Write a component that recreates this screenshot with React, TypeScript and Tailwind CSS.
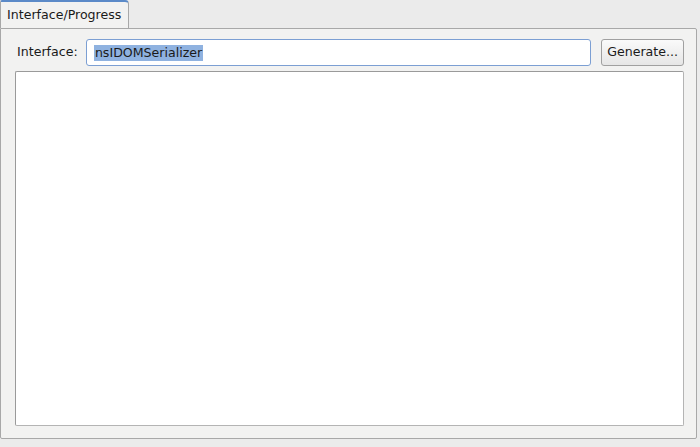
import React from 'react';

const App: React.FC = () => {
    return (
        <div className="w-[700px] h-[447px] bg-[#ebebeb] flex flex-col font-['DejaVu_Sans',sans-serif] text-[12.6px] text-[#1a1a1a] overflow-hidden">
            {/* tab strip */}
            <div className="flex h-[28px] shrink-0">
                <div className="w-[129px] h-[28px] bg-[#f2f2f1] border border-b-0 border-[#a8a8a8] border-t-[2px] border-t-[#5b8ac8] rounded-tr-[4px] rounded-tl-[2px] flex items-center pl-[6px] pt-[1px] relative z-10 -mb-px">
                    Interface/Progress
                </div>
            </div>

            {/* panel */}
            <div className="w-[697px] h-[411px] bg-[#f2f2f1] border border-[#a8a8a8] rounded-b-[2px] rounded-tr-[2px] flex flex-col pt-[10px] pl-[14px] pr-[12px] pb-[12px]">
                <div className="flex items-center h-[27px]">
                    <span className="ml-[2px] w-[69px]">Interface:</span>
                    <div className="w-[506px] h-[27px] bg-white border border-[#7c9fd3] rounded-[3px] flex items-center px-[7px]">
                        <span className="bg-[#8fb2e0] text-[#1a1a1a] leading-[16px] px-[1px]">nsIDOMSerializer</span>
                    </div>
                    <button className="ml-[10px] w-[83px] h-[27px] rounded-[3px] border border-[#a0a0a0] bg-gradient-to-b from-[#fafafa] to-[#e6e6e6] text-[#1a1a1a]">
                        Generate...
                    </button>
                </div>
                <div className="mt-[5px] flex-1 bg-white border border-[#b4b4b4] border-t-[#9a9a9a] border-l-[#9a9a9a] rounded-[2px]" />
            </div>
        </div>
    );
};

export default App;
